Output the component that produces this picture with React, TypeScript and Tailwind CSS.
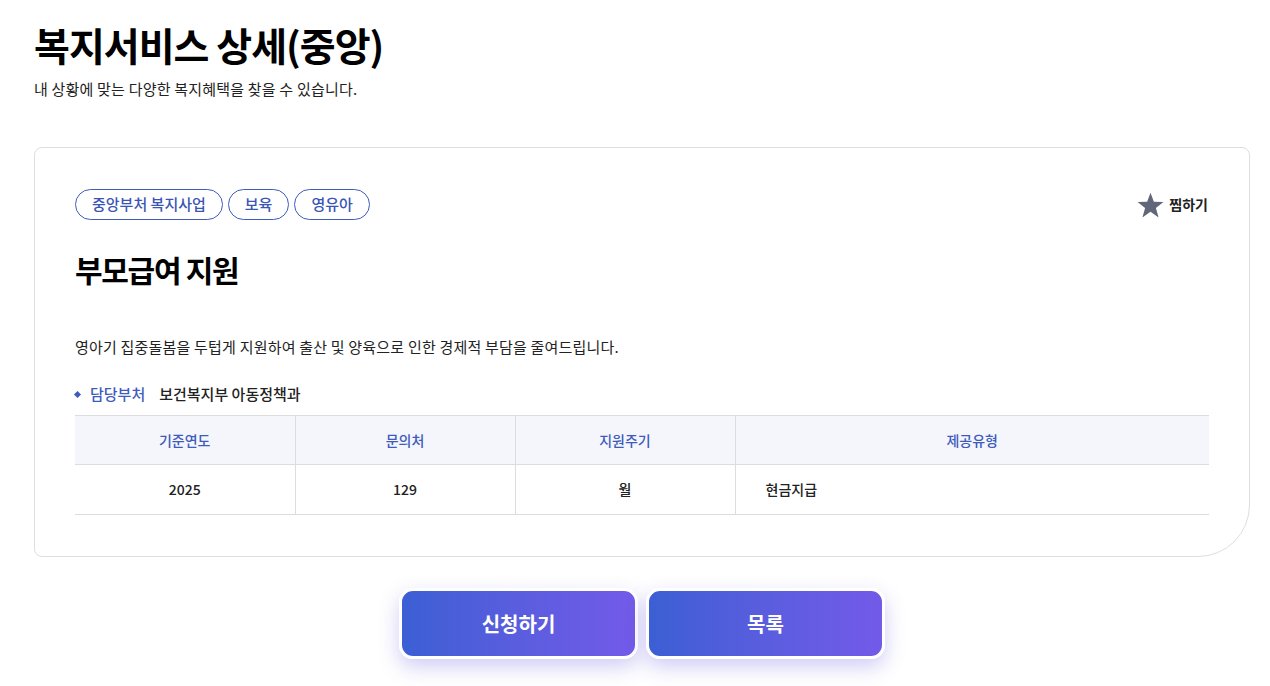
const font = { fontFamily: '"Noto Sans CJK KR", "Noto Sans", sans-serif' }

const tags = ["중앙부처 복지사업", "보육", "영유아"]

function StarIcon() {
  return (
    <svg width="27" height="26" viewBox="0 0 24 23" className="fill-[#62667a]">
      <polygon points="12,0.5 15,8.6 23.5,8.8 16.8,14.1 19.2,22.5 12,17.6 4.8,22.5 7.2,14.1 0.5,8.8 9,8.6" />
    </svg>
  )
}

export default function App() {
  return (
    <main className="min-h-screen bg-white text-[#111]" style={font}>
      <div className="pl-[34px] pr-[20px] pt-[15px]">
        <h1 className="text-[39px] font-bold leading-[58px] tracking-[-1px] text-black">복지서비스 상세(중앙)</h1>
        <p className="mt-[5px] text-[15px] leading-[22px] tracking-[0.2px] text-[#222]">내 상황에 맞는 다양한 복지혜택을 찾을 수 있습니다.</p>

        <section className="mt-[47px] rounded-tl-[8px] rounded-tr-[8px] rounded-bl-[8px] rounded-br-[52px] border border-[#dedede] px-[40px] pt-[41px] pb-[41px]">
          <div className="flex items-center justify-between">
            <div className="flex gap-[5px]">
              {tags.map((t) => (
                <span
                  key={t}
                  className="flex h-[31px] items-center rounded-full border border-[#3f5bbd] px-[16px] text-[15px] font-medium text-[#3a55b4]"
                >
                  {t}
                </span>
              ))}
            </div>
            <button className="mr-[1px] flex items-center gap-[5px] text-[14px] font-bold text-[#222]">
              <StarIcon />
              찜하기
            </button>
          </div>

          <h2 className="mt-[29px] text-[30px] font-bold leading-[40px] tracking-[-1.3px] text-black">부모급여 지원</h2>

          <p className="mt-[46px] text-[15px] leading-[24px] tracking-[0.2px] text-[#222]">
            영아기 집중돌봄을 두텁게 지원하여 출산 및 양육으로 인한 경제적 부담을 줄여드립니다.
          </p>

          <div className="mt-[23px] flex items-center text-[15px] leading-[24px]">
            <span className="mr-[10px] h-[5px] w-[5px] rotate-45 bg-[#3f5bbd]" />
            <span className="font-medium text-[#3f5bbd]">담당부처</span>
            <span className="ml-[14px] font-medium text-[#222]">보건복지부 아동정책과</span>
          </div>

          <table className="mt-[9px] w-full border-collapse text-[14px]">
            <thead>
              <tr className="h-[49px] border-y border-[#dcdcdc] bg-[#f4f6fb] text-[#3f5bbd]">
                <th className="w-[220px] border-r border-[#dcdcdc] font-medium">기준연도</th>
                <th className="w-[220px] border-r border-[#dcdcdc] font-medium">문의처</th>
                <th className="w-[220px] border-r border-[#dcdcdc] font-medium">지원주기</th>
                <th className="font-medium">제공유형</th>
              </tr>
            </thead>
            <tbody>
              <tr className="h-[50px] border-b border-[#dcdcdc] font-medium text-[#222]">
                <td className="border-r border-[#dcdcdc] text-center">2025</td>
                <td className="border-r border-[#dcdcdc] text-center">129</td>
                <td className="border-r border-[#dcdcdc] text-center">월</td>
                <td className="pl-[30px]">현금지급</td>
              </tr>
            </tbody>
          </table>
        </section>

        <div className="mt-[31px] flex justify-center gap-[8px] pb-[27px]">
          {["신청하기", "목록"].map((b) => (
            <button
              key={b}
              className="h-[71px] w-[239px] rounded-[14px] border-[3px] border-white bg-gradient-to-r from-[#3b5fd4] to-[#735ae9] text-[20px] font-bold text-white shadow-[0_8px_20px_rgba(100,90,220,0.3)]"
            >
              {b}
            </button>
          ))}
        </div>
      </div>
    </main>
  )
}
